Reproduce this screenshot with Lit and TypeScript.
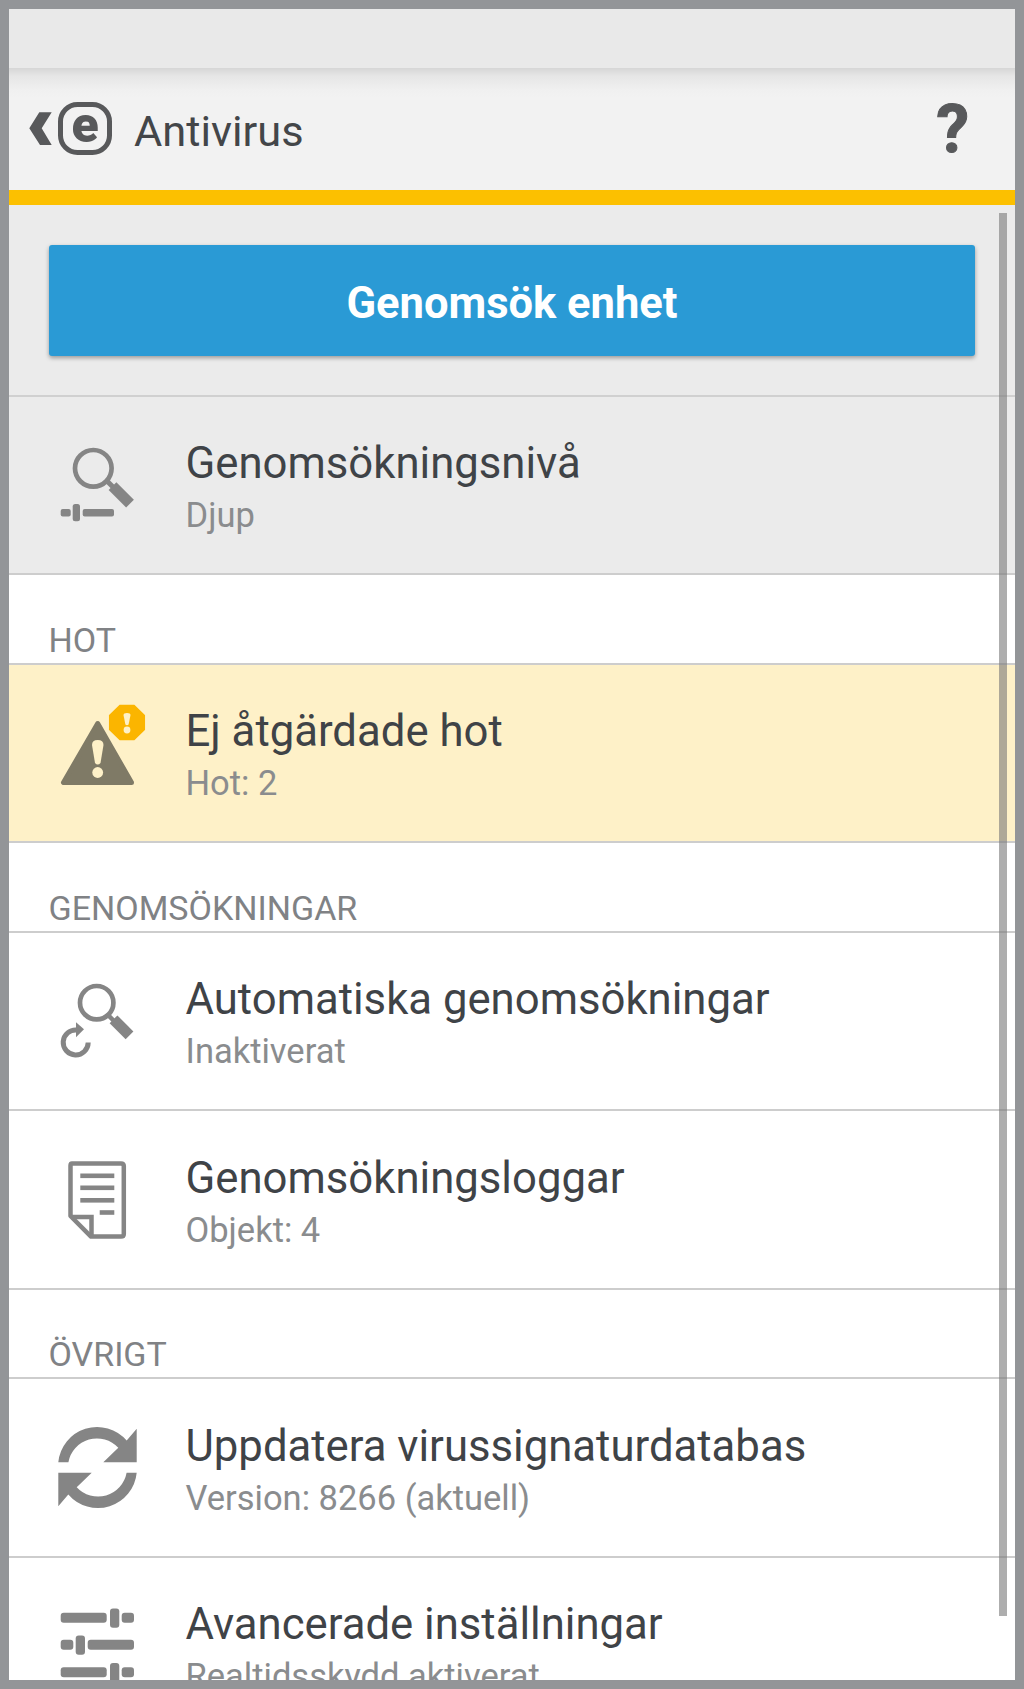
import { LitElement, html, css, svg } from "lit";
import { customElement } from "lit/decorators.js";

const icons: Record<string, unknown> = {
  level: svg`<circle cx="43.3" cy="28.3" r="18.3" fill="none" stroke="#858585" stroke-width="4.7"/>
    <path d="M57 41 L63 47" stroke="#858585" stroke-width="5"/>
    <path d="M62.5 46.2 L80 63.7" stroke="#858585" stroke-width="11"/>
    <rect x="10.7" y="69" width="10" height="7.4" rx="2" fill="#858585"/>
    <rect x="22.7" y="64" width="7.3" height="17.3" rx="2.5" fill="#858585"/>
    <rect x="32.7" y="69" width="31.3" height="7.4" rx="2" fill="#858585"/>`,
  threat: svg`<path d="M47.7 15.5 L13.5 74.5 H81.5 Z" fill="#7f7a66" stroke="#7f7a66" stroke-width="5" stroke-linejoin="round"/>
    <path d="M42 37 Q42 32 47.7 32 Q53.5 32 53.5 37 L50.5 55 Q47.7 58 45 55 Z" fill="#fef1c8"/>
    <circle cx="47.7" cy="64.5" r="5.4" fill="#fef1c8"/>
    <path d="M69 -4.5 H85 L96.3 6.5 V22.5 L85 33.5 H69 L57.7 22.5 V6.5 Z" fill="#fbb500" stroke="#fef1c8" stroke-width="2.5"/>
    <path d="M73.5 7 Q73.5 5 77 5 Q80.5 5 80.5 7 L78.6 16.5 Q77 18 75.4 16.5 Z" fill="#fef1c8"/>
    <circle cx="77" cy="22" r="3.4" fill="#fef1c8"/>`,
  auto: svg`<circle cx="46.7" cy="26.7" r="16.7" fill="none" stroke="#858585" stroke-width="4.7"/>
    <path d="M58 39 L64 45" stroke="#858585" stroke-width="4.5"/>
    <path d="M63.5 43.3 L79.5 59.3" stroke="#858585" stroke-width="11"/>
    <path d="M38.2 66.5 A12.5 12.5 0 1 1 27 54" fill="none" stroke="#858585" stroke-width="5"/>
    <path d="M26 46.3 L34 53.3 L26 61.3 Z" fill="#858585"/>`,
  logs: svg`<path d="M22 8.4 H71 Q73.8 8.4 73.8 11 V79 Q73.8 81.6 71 81.6 H41 L20.5 61 V10.5 Q20.5 8.4 22 8.4 Z" fill="none" stroke="#858585" stroke-width="4.5" stroke-linejoin="round"/>
    <path d="M21 62 H41.5 V81" fill="none" stroke="#858585" stroke-width="4.5"/>
    <g fill="#858585"><rect x="30.3" y="18.5" width="34" height="4.6"/><rect x="30.3" y="30.5" width="34" height="4.6"/>
    <rect x="30.3" y="43" width="34" height="4.6"/><rect x="49.7" y="55.2" width="14.6" height="4.6"/></g>`,
  sync: svg`<g fill="#858585"><path d="M8.3 39.2 A39 39 0 0 1 76.7 17.5 L86.7 5.8 V39.2 H53.3 L68.3 24.8 A29 29 0 0 0 18.4 39.2 Z"/>
    <path d="M86.7 49.8 A39 39 0 0 1 18.3 71.5 L8.3 83.2 V49.8 H41.7 L26.7 64.2 A29 29 0 0 0 76.6 49.8 Z"/></g>`,
  adv: svg`<g fill="#858585"><rect x="10.7" y="11.8" width="46" height="10" rx="3"/><rect x="60" y="7.5" width="9.3" height="19.3" rx="3"/><rect x="71.7" y="11.8" width="12.3" height="10" rx="3"/>
    <rect x="10.7" y="38.8" width="12.6" height="10" rx="3"/><rect x="25.7" y="34.5" width="9.3" height="19.3" rx="3"/><rect x="37.7" y="38.8" width="46.3" height="10" rx="3"/>
    <rect x="10.7" y="66.2" width="46" height="10" rx="3"/><rect x="60" y="61.9" width="9.3" height="19.3" rx="3"/><rect x="71.7" y="66.2" width="12.3" height="10" rx="3"/></g>`,
};

@customElement("app-root")
export class AppRoot extends LitElement {
  static styles = css`
    :host { display: block; width: 1024px; height: 1689px; font-family: Roboto, "Liberation Sans", sans-serif; }
    .frame { position: relative; box-sizing: border-box; width: 1024px; height: 1689px; border: 9px solid #939598; overflow: hidden; background: #fff; }
    .status { height: 59px; background: #e9e9e9; }
    .header { box-sizing: border-box; height: 122px; display: flex; align-items: center; padding: 0 0 0 20px; background: linear-gradient(#d6d6d6 0, #e6e6e6 8px, #f0f0f0 22px, #f2f2f2 30px); }
    .logo { width: 84px; height: 56px; flex: none; display: block; overflow: visible; }
    .logo text { font-family: Roboto, sans-serif; font-weight: 900; font-size: 50px; fill: #58595b; }
    .title { margin-left: 21px; padding-top: 6px; font-size: 43.4px; color: #434649; flex: 1; line-height: 1; }
    .help { font-size: 66px; font-weight: 700; color: #58595b; line-height: 1; margin-right: 46px; padding-top: 2px; -webkit-text-stroke: 1px #58595b; }
    .accent { height: 14.6px; background: #fcc000; }
    .top { box-sizing: border-box; height: 192px; padding: 40px 40px 0; background: #ebebeb; border-bottom: 2px solid #d0d0d0; }
    .scan { box-sizing: border-box; height: 111px; padding-top: 6px; border-radius: 3px; background: #2a9ad5; color: #fff; font-size: 43.5px; font-weight: 700; display: flex; align-items: center; justify-content: center; box-shadow: 0 2px 4px rgba(0,0,0,.35); }
    .row { box-sizing: border-box; height: 178.67px; display: flex; align-items: center; padding-left: 41px; background: #fff; border-bottom: 2px solid #cdcdcd; }
    .row.grey { background: #ebebeb; }
    .row.warn { background: #fef1c8; }
    .row svg { width: 90px; height: 90px; flex: none; overflow: visible; display: block; }
    .text { margin-left: 45.5px; padding-top: 2px; display: flex; flex-direction: column; }
    .t { font-size: 43.7px; line-height: 54px; color: #3f4347; }
    .s { font-size: 34.5px; line-height: 42px; margin-top: 4px; color: #8a8c8e; }
    .section { box-sizing: border-box; height: 89.33px; display: flex; align-items: flex-end; padding: 0 0 1px 39.5px; background: #fff; border-bottom: 2px solid #cdcdcd; font-size: 34px; line-height: 44px; color: #808285; }
    .scrollbar { position: absolute; right: 8.4px; top: 204px; width: 7.6px; height: 1403px; background: rgba(120,120,120,.6); }
  `;

  private row(icon: string, t: string, s: string, cls = "") {
    return html`<div class="row ${cls}">
      <svg viewBox="0 0 90 90">${icons[icon]}</svg>
      <div class="text"><div class="t">${t}</div><div class="s">${s}</div></div>
    </div>`;
  }

  render() {
    return html`<div class="frame">
      <div class="status"></div>
      <div class="header">
        <svg class="logo" viewBox="0 0 84 56">
          <path d="M22.7 11.3 L12.7 27.3 L22.7 44 H11 L0.3 27.3 L10.3 11.3 Z" fill="#58595b"/>
          <rect x="31.5" y="3.5" width="49" height="48" rx="17" fill="none" stroke="#58595b" stroke-width="5"/>
          <text x="56" y="41" text-anchor="middle">e</text>
        </svg>
        <div class="title">Antivirus</div>
        <div class="help">?</div>
      </div>
      <div class="accent"></div>
      <div class="top"><div class="scan">Genomsök enhet</div></div>
      ${this.row("level", "Genomsökningsnivå", "Djup", "grey")}
      <div class="section">HOT</div>
      ${this.row("threat", "Ej åtgärdade hot", "Hot: 2", "warn")}
      <div class="section">GENOMSÖKNINGAR</div>
      ${this.row("auto", "Automatiska genomsökningar", "Inaktiverat")}
      ${this.row("logs", "Genomsökningsloggar", "Objekt: 4")}
      <div class="section">ÖVRIGT</div>
      ${this.row("sync", "Uppdatera virussignaturdatabas", "Version: 8266 (aktuell)")}
      ${this.row("adv", "Avancerade inställningar", "Realtidsskydd aktiverat")}
      <div class="scrollbar"></div>
    </div>`;
  }
}
